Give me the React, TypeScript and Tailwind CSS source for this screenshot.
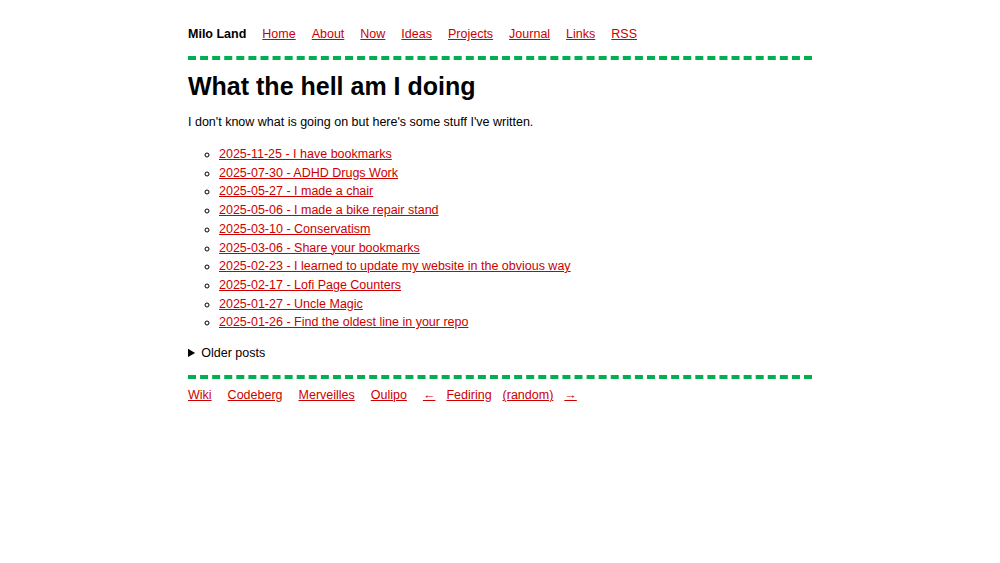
const posts = [
  "2025-11-25 - I have bookmarks",
  "2025-07-30 - ADHD Drugs Work",
  "2025-05-27 - I made a chair",
  "2025-05-06 - I made a bike repair stand",
  "2025-03-10 - Conservatism",
  "2025-03-06 - Share your bookmarks",
  "2025-02-23 - I learned to update my website in the obvious way",
  "2025-02-17 - Lofi Page Counters",
  "2025-01-27 - Uncle Magic",
  "2025-01-26 - Find the oldest line in your repo",
];

const navLinks = ["Home", "About", "Now", "Ideas", "Projects", "Journal", "Links", "RSS"];

const linkCls = "text-[#cc0000] underline";

export default function App() {
  return (
    <div className="min-h-screen bg-white font-['Liberation_Sans',Arial,sans-serif] text-[12.5px] text-black">
      <div className="mx-auto w-[624px] pt-[25px]">
        <nav className="flex gap-4 leading-[18px]">
          <span className="font-bold">Milo Land</span>
          {navLinks.map((l) => (
            <a key={l} href="#" className={linkCls}>
              {l}
            </a>
          ))}
        </nav>
        <hr className="mt-[13px] border-0 border-t-4 border-dashed border-[#00b050]" />

        <h1 className="mt-[11px] text-[25px] font-bold leading-[30px]">What the hell am I doing</h1>
        <p className="mt-[12px] leading-[19px]">
          I don't know what is going on but here's some stuff I've written.
        </p>

        <ul className="mt-[13px] list-[circle] pl-[31px] leading-[18.7px]">
          {posts.map((p) => (
            <li key={p}>
              <a href="#" className={linkCls}>
                {p}
              </a>
            </li>
          ))}
        </ul>

        <details className="mt-[12px] leading-[19px]">
          <summary className="cursor-pointer">Older posts</summary>
        </details>

        <hr className="mt-[12px] border-0 border-t-4 border-dashed border-[#00b050]" />

        <footer className="mt-[7px] flex gap-4 leading-[18px]">
          <a href="#" className={linkCls}>Wiki</a>
          <a href="#" className={linkCls}>Codeberg</a>
          <a href="#" className={linkCls}>Merveilles</a>
          <a href="#" className={linkCls}>Oulipo</a>
          <span className="flex gap-[11px]">
            <a href="#" className={linkCls}>←</a>
            <a href="#" className={linkCls}>Fediring</a>
            <a href="#" className={linkCls}>(random)</a>
            <a href="#" className={linkCls}>→</a>
          </span>
        </footer>
      </div>
    </div>
  );
}
